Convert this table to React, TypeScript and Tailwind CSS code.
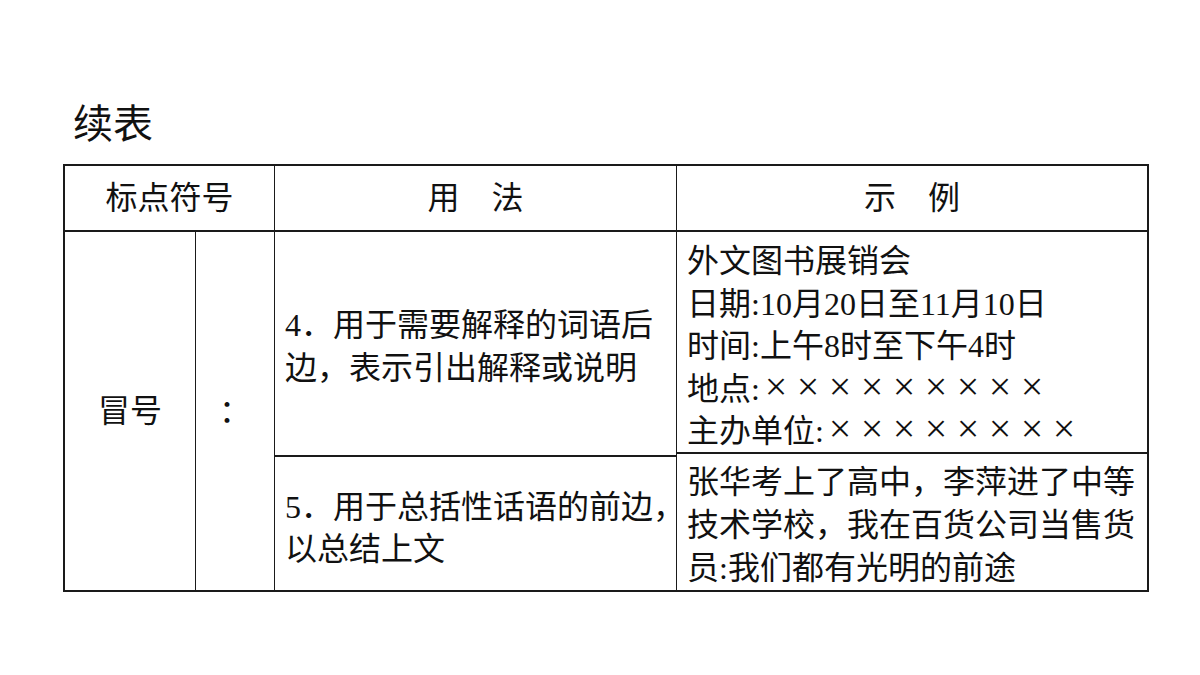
import React from 'react';

const FONT = { fontFamily: '"Liberation Serif", "Noto Sans CJK SC", serif' };

function Crosses({ n }: { n: number }) {
  return (
    <>
      {[...Array(n)].map((_, i) => (
        <span key={i} className="inline-block w-8 text-center text-[40px] leading-[0]">×</span>
      ))}
    </>
  );
}

export default function App() {
  return (
    <div className="w-[1200px] h-[675px] bg-white text-[#111] pt-[105px] pl-[63px]" style={FONT}>
      <div className="pl-[10px] h-10 text-[40px] leading-[40px]">续表</div>

      <div className="mt-[19px] w-[1086px] h-[428px] grid grid-cols-[130px_78px_401px_470px] grid-rows-[64px_358px] gap-x-px gap-y-[2px] p-[2px] bg-[#1a1a1a] text-[32px]">
        <div className="col-span-2 bg-white flex items-center justify-center">标点符号</div>
        <div className="bg-white flex items-center justify-center">用　法</div>
        <div className="bg-white flex items-center justify-center">示　例</div>

        <div className="bg-white flex items-center justify-center">冒号</div>
        <div className="bg-white flex items-center justify-center">：</div>

        <div className="flex flex-col gap-[2px] bg-[#1a1a1a] min-h-0">
          <div className="h-[223px] bg-white flex flex-col justify-center pl-[10px] pt-[6px] leading-[43px] whitespace-nowrap">
            <div>4．用于需要解释的词语后</div>
            <div>边，表示引出解释或说明</div>
          </div>
          <div className="flex-1 min-h-0 bg-white flex flex-col justify-center pl-[10px] pt-[8px] leading-[42px] whitespace-nowrap">
            <div>5．用于总括性话语的前边，</div>
            <div>以总结上文</div>
          </div>
        </div>

        <div className="flex flex-col gap-[2px] bg-[#1a1a1a] min-h-0">
          <div className="h-[220px] bg-white pt-[8px] pl-[10px] leading-[42.5px] whitespace-nowrap overflow-hidden">
            <div>外文图书展销会</div>
            <div>日期:10月20日至11月10日</div>
            <div>时间:上午8时至下午4时</div>
            <div>地点:<Crosses n={9} /></div>
            <div>主办单位:<Crosses n={8} /></div>
          </div>
          <div className="flex-1 min-h-0 bg-white pt-[7px] pl-[10px] leading-[43px] whitespace-nowrap overflow-hidden">
            <div>张华考上了高中，李萍进了中等</div>
            <div>技术学校，我在百货公司当售货</div>
            <div>员:我们都有光明的前途</div>
          </div>
        </div>
      </div>
    </div>
  );
}
